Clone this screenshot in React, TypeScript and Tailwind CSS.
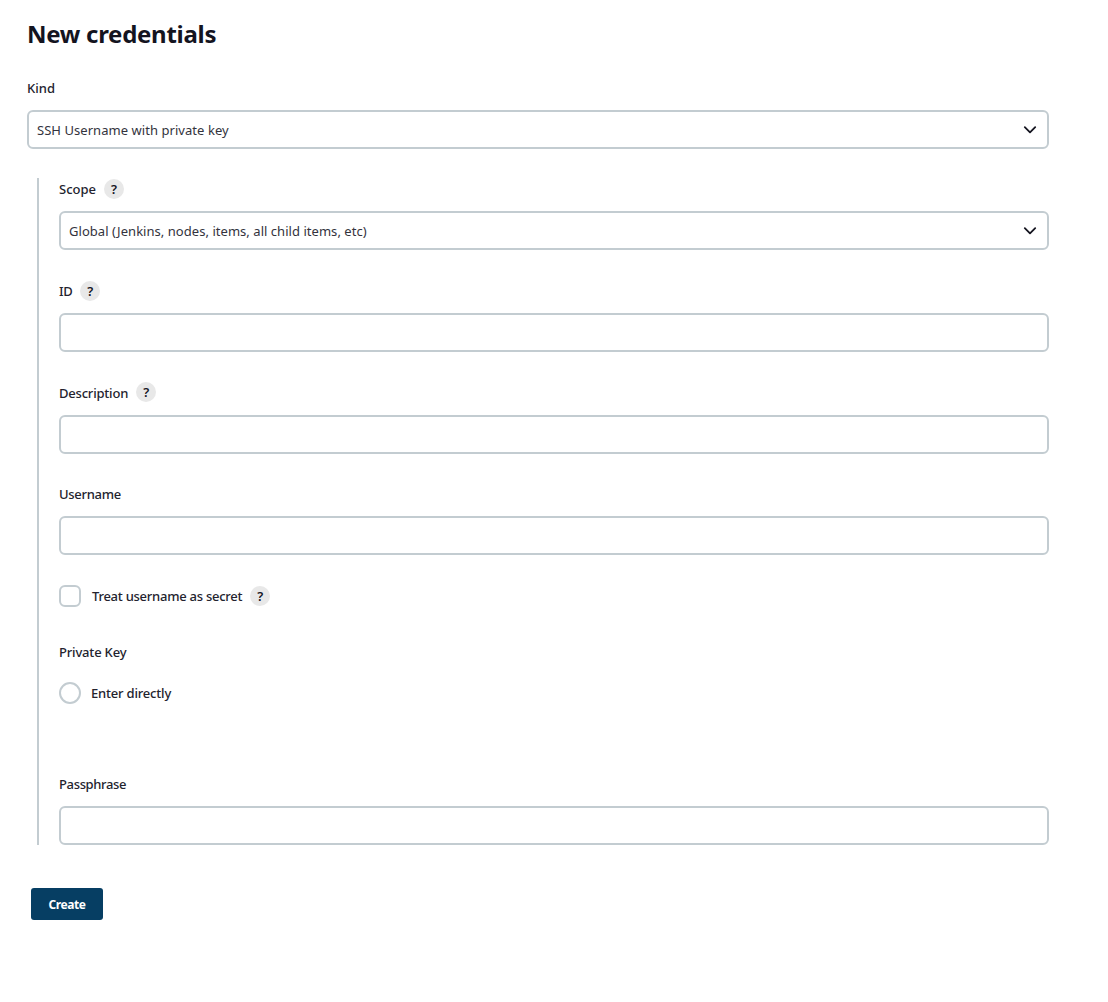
import React from "react";

function Help({ className = "" }: { className?: string }) {
  return (
    <button
      type="button"
      className={`flex size-5 items-center justify-center rounded-full bg-[#e8e8e8] text-[13px] leading-5 font-semibold text-[#14141f] ${className}`}
    >
      ?
    </button>
  );
}

type LabelProps = { text: string; tracking?: string; help?: boolean; helpClass?: string };

function Label({ text, tracking = "", help, helpClass }: LabelProps) {
  return (
    <div className="flex h-5 items-center gap-2">
      <span className={`text-[13px] leading-5 font-medium whitespace-nowrap ${tracking}`}>{text}</span>
      {help && <Help className={helpClass} />}
    </div>
  );
}

function Select({ value, tracking }: { value: string; tracking: string }) {
  return (
    <div className="mt-3 flex h-[39px] items-center justify-between rounded-[6px] border-2 border-[#c3ccd1] bg-white pr-[10px] pl-2">
      <span className={`text-[13px] leading-5 text-[#33333d] ${tracking}`}>{value}</span>
      <svg className="size-[14px]" viewBox="0 0 14 14" fill="none" stroke="#14141f" strokeWidth="1.8" strokeLinecap="round" strokeLinejoin="round">
        <path d="M1.8 4.2 7 9.4 12.2 4.2" />
      </svg>
    </div>
  );
}

function TextInput() {
  return <input className="mt-3 block h-[39px] w-full rounded-[6px] border-2 border-[#c3ccd1] bg-white px-2 text-[13px] outline-none" />;
}

export default function App() {
  return (
    <main className="h-[1002px] bg-white pr-[59px] pl-[27px] font-['Noto_Sans',sans-serif] text-[#23232e]">
      <h1 className="pt-4 text-[24px] leading-9 font-bold tracking-[-0.28px] text-[#14141f]">New credentials</h1>
      <div className="mt-[26px]">
        <Label text="Kind" />
        <Select value="SSH Username with private key" tracking="tracking-[0.05px]" />
      </div>
      <section className="mt-[29px] ml-[10px] h-[667px] border-l-2 border-[#c3ccd1] pl-5">
        <div className="pt-px">
          <Label text="Scope" help />
          <Select value="Global (Jenkins, nodes, items, all child items, etc)" tracking="tracking-[0.04px]" />
        </div>
        <div className="mt-[31px]">
          <Label text="ID" tracking="tracking-[-0.4px]" help />
          <TextInput />
        </div>
        <div className="mt-[31px]">
          <Label text="Description" tracking="tracking-[-0.2px]" help helpClass="mb-0.5" />
          <TextInput />
        </div>
        <div className="mt-[30px]">
          <Label text="Username" tracking="tracking-[-0.3px]" />
          <TextInput />
        </div>
        <div className="mt-[30px] flex h-[22px] items-center">
          <span className="mr-[11px] size-[22px] rounded-[6px] border-2 border-[#c3ccd1]" />
          <Label text="Treat username as secret" tracking="tracking-[-0.25px]" help />
        </div>
        <div className="mt-[35px]">
          <Label text="Private Key" tracking="tracking-[-0.18px]" />
        </div>
        <div className="mt-5 flex h-[22px] items-center">
          <span className="mr-[10px] size-[22px] rounded-full border-2 border-[#c3ccd1]" />
          <Label text="Enter directly" tracking="tracking-[-0.19px]" />
        </div>
        <div className="mt-[70px]">
          <Label text="Passphrase" tracking="tracking-[-0.35px]" />
          <TextInput />
        </div>
      </section>
      <button
        type="button"
        className="mt-[43px] ml-1 flex h-8 w-[72px] items-center justify-center rounded-[3px] bg-[#063e63] pt-px text-[12px] font-bold tracking-[-0.45px] text-white"
      >
        Create
      </button>
    </main>
  );
}
